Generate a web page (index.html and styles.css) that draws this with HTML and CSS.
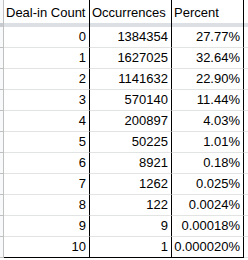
FILE: index.html
```html
<!DOCTYPE html>
<html>
<head>
<meta charset="utf-8">
<link rel="stylesheet" href="styles.css">
</head>
<body>
<div class="sheet">
  <div class="rh rh-head"></div>
  <div class="c hd">Deal-in Count</div>
  <div class="c hd">Occurrences</div>
  <div class="c hd">Percent</div>
  <div class="c hd last"></div>

  <div class="rh band rh-band"></div>
  <div class="c band"></div>
  <div class="c band"></div>
  <div class="c band"></div>
  <div class="c band last"></div>

  <div class="rh"></div><div class="c n">0</div><div class="c n">1384354</div><div class="c n">27.77%</div><div class="c last"></div>
  <div class="rh"></div><div class="c n">1</div><div class="c n">1627025</div><div class="c n">32.64%</div><div class="c last"></div>
  <div class="rh"></div><div class="c n">2</div><div class="c n">1141632</div><div class="c n">22.90%</div><div class="c last"></div>
  <div class="rh"></div><div class="c n">3</div><div class="c n">570140</div><div class="c n">11.44%</div><div class="c last"></div>
  <div class="rh"></div><div class="c n">4</div><div class="c n">200897</div><div class="c n">4.03%</div><div class="c last"></div>
  <div class="rh"></div><div class="c n">5</div><div class="c n">50225</div><div class="c n">1.01%</div><div class="c last"></div>
  <div class="rh"></div><div class="c n">6</div><div class="c n">8921</div><div class="c n">0.18%</div><div class="c last"></div>
  <div class="rh"></div><div class="c n">7</div><div class="c n">1262</div><div class="c n">0.025%</div><div class="c last"></div>
  <div class="rh"></div><div class="c n">8</div><div class="c n">122</div><div class="c n">0.0024%</div><div class="c last"></div>
  <div class="rh"></div><div class="c n">9</div><div class="c n">9</div><div class="c n">0.00018%</div><div class="c last"></div>
  <div class="rh"></div><div class="c n bot">10</div><div class="c n bot">1</div><div class="c n bot">0.000020%</div><div class="c last"></div>
</div>
</body>
</html>
```

FILE: styles.css
```css
html, body {
  margin: 0;
  padding: 0;
  background: #ffffff;
}

.sheet {
  display: grid;
  grid-template-columns: 4px 86px 82px 72px 1fr;
  grid-template-rows: 23px 4px repeat(11, 21px);
  font-family: "Liberation Sans", Arial, sans-serif;
  font-size: 13px;
  color: #000;
  width: 248px;
}

.c {
  box-sizing: border-box;
  border-right: 1px solid #000;
  border-bottom: 1px solid #e2e3e3;
  line-height: 20px;
  white-space: nowrap;
  overflow: hidden;
}

.c.last {
  border-right: none;
}

.rh {
  box-sizing: border-box;
  background: #f8f9fa;
  border-right: 1px solid #c0c0c0;
  border-bottom: 1px solid #c0c0c0;
}

.hd {
  border-bottom: none;
  padding-left: 2px;
  line-height: 25px;
}

.rh-head {
  border-bottom: none;
}

.band {
  background: #dcdfe3;
  border-bottom: none;
}

.rh-band {
  background: #c8cbcf;
}

.n {
  text-align: right;
  padding-right: 3px;
}

.bot {
  border-bottom-color: #000;
}
```
